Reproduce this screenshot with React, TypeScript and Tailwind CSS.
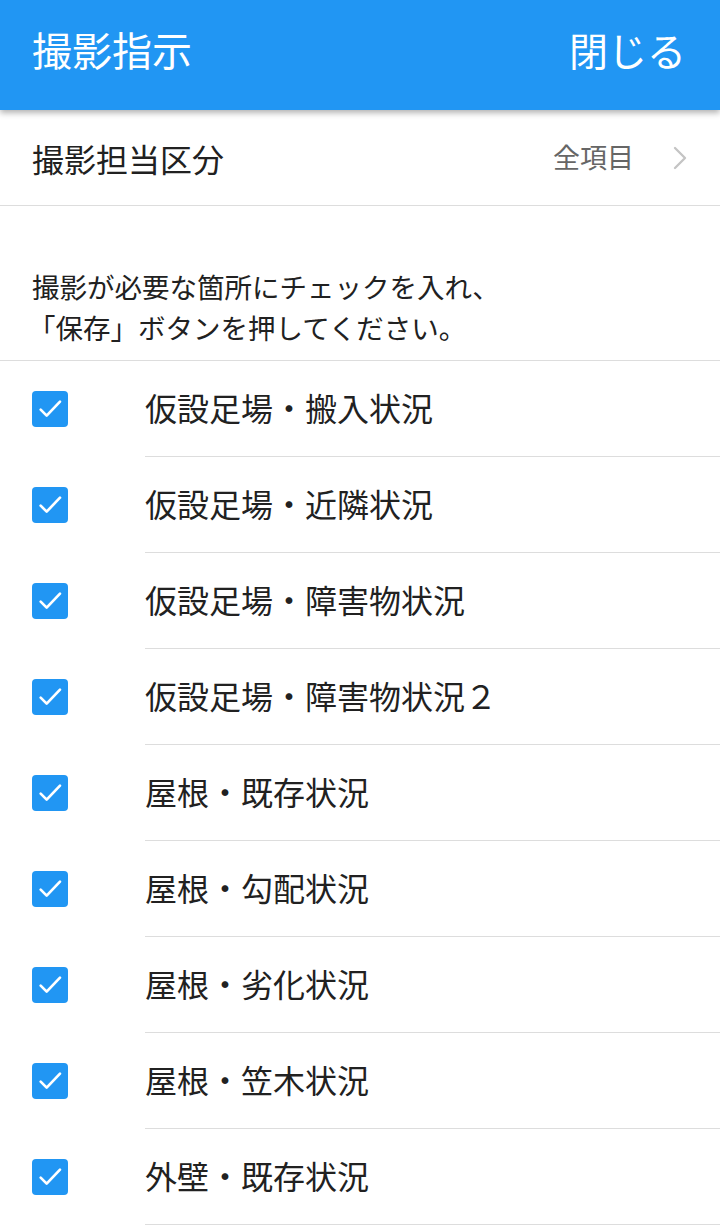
import { ChevronRight } from 'lucide-react';

const items = [
  '仮設足場・搬入状況',
  '仮設足場・近隣状況',
  '仮設足場・障害物状況',
  '仮設足場・障害物状況２',
  '屋根・既存状況',
  '屋根・勾配状況',
  '屋根・劣化状況',
  '屋根・笠木状況',
  '外壁・既存状況',
];

function CheckBox() {
  return (
    <div className="flex h-[36px] w-[36px] items-center justify-center rounded-[4px] bg-[#2196f3]">
      <svg viewBox="0 0 24 24" className="h-[32px] w-[32px]" fill="none" stroke="white" strokeWidth="2" strokeLinecap="round" strokeLinejoin="round">
        <path d="M5 12.5l4.5 4.5L19.5 6.5" />
      </svg>
    </div>
  );
}

export default function App() {
  return (
    <div
      className="h-[1231px] w-[720px] overflow-hidden bg-white text-[#212121]"
      style={{ fontFamily: '"Noto Sans CJK JP", "Noto Sans", sans-serif' }}
    >
      <header className="relative z-10 flex h-[110px] items-center justify-between bg-[#2196f3] pb-[12px] pl-[32px] pr-[34px] text-white shadow-[0_3px_6px_rgba(0,0,0,0.3)]">
        <h1 className="text-[40px] leading-none">撮影指示</h1>
        <button className="text-[39px] leading-none">閉じる</button>
      </header>

      <div className="flex h-[96px] items-center justify-between border-b border-[#dddddd] pl-[32px] pr-[20px]">
        <span className="text-[32px]">撮影担当区分</span>
        <div className="flex items-center gap-[26px]">
          <span className="text-[27px] text-[#666666]">全項目</span>
          <ChevronRight className="h-[40px] w-[40px] text-[#c4c4c4]" strokeWidth={1.4} />
        </div>
      </div>

      <div className="border-b border-[#dddddd] px-[32px] pb-[12px] pt-[60px] text-[27.5px] leading-[41px]">
        <p>撮影が必要な箇所にチェックを入れ、</p>
        <p className="-ml-[4px]">「保存」ボタンを押してください。</p>
      </div>

      <ul>
        {items.map((label) => (
          <li key={label} className="flex h-[96px] items-center">
            <div className="flex w-[145px] shrink-0 justify-start pl-[32px]">
              <CheckBox />
            </div>
            <div className="flex h-full flex-1 items-center border-b border-[#dddddd] pb-[3px] text-[32px]">
              {label}
            </div>
          </li>
        ))}
      </ul>
    </div>
  );
}
